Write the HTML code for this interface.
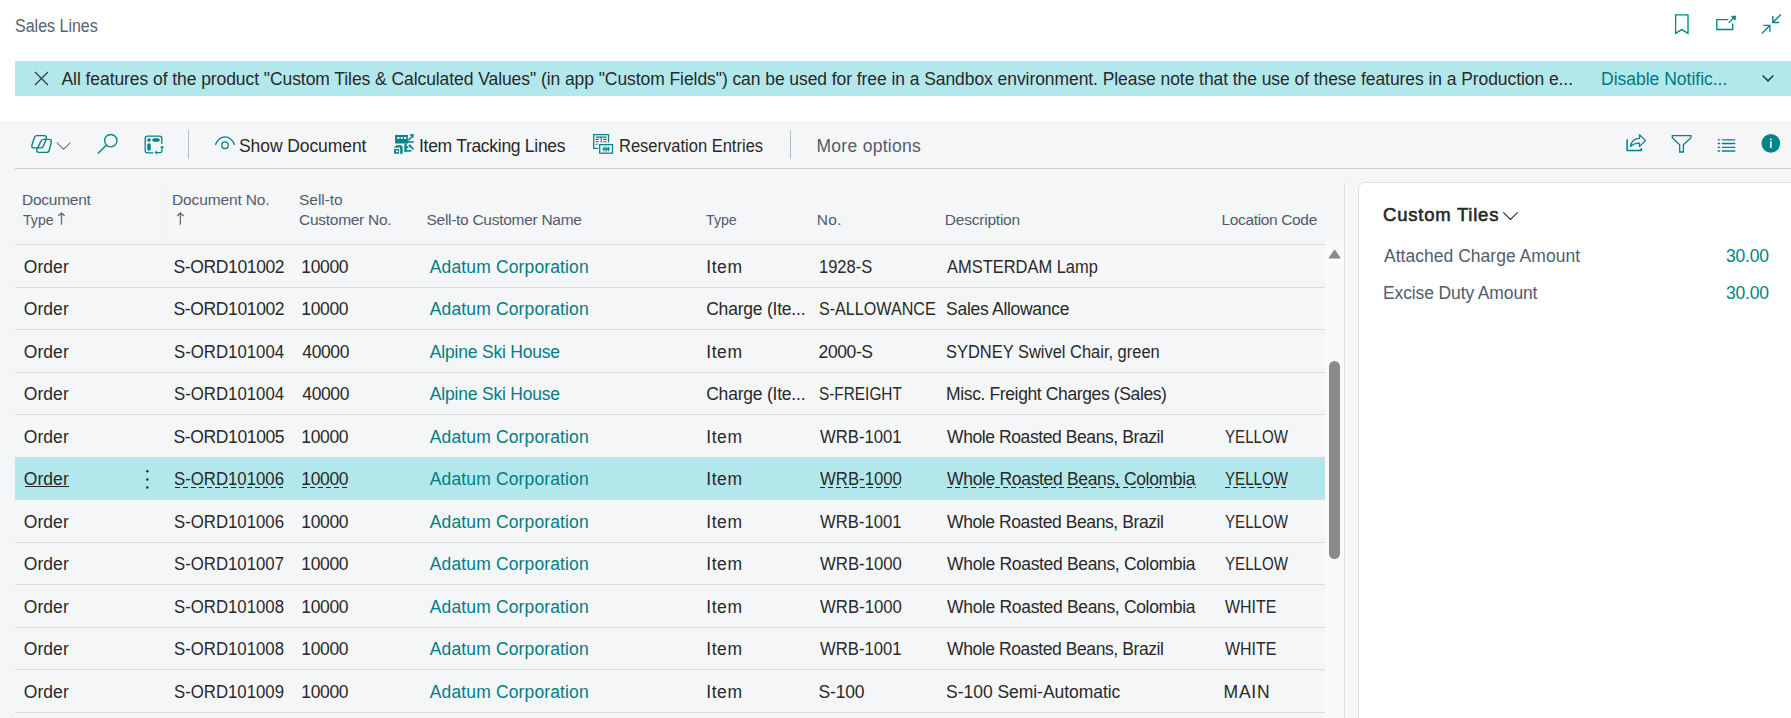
<!DOCTYPE html>
<html><head><meta charset="utf-8">
<style>
html,body{margin:0;padding:0;}
body{width:1791px;height:718px;overflow:hidden;position:relative;background:#ffffff;font-family:"Liberation Sans",sans-serif;}
.t{position:absolute;white-space:nowrap;line-height:1;}
.abs{position:absolute;}
svg{position:absolute;overflow:visible;}
</style></head><body>
<div class="abs" style="left:15px;top:61px;width:1776px;height:35px;background:#b2e8ec;"></div>
<div class="abs" style="left:0;top:121px;width:1791px;height:597px;background:#f5f6f8;"></div>
<div class="abs" style="left:15px;top:168px;width:1776px;height:1.2px;background:#c8cbd0;"></div>
<div class="abs" style="left:188px;top:130px;width:1px;height:29px;background:#b5bcc5;"></div>
<div class="abs" style="left:790px;top:130px;width:1px;height:29px;background:#b5bcc5;"></div>
<div class="abs" style="left:165px;top:183px;width:1px;height:60px;background:#eef0f2;"></div>
<div class="abs" style="left:15px;top:244px;width:1310px;height:1px;background:#d9dce0;"></div>
<div class="abs" style="left:15px;top:287px;width:1310px;height:1px;background:#d9dce0;"></div>
<div class="abs" style="left:15px;top:329px;width:1310px;height:1px;background:#d9dce0;"></div>
<div class="abs" style="left:15px;top:372px;width:1310px;height:1px;background:#d9dce0;"></div>
<div class="abs" style="left:15px;top:414px;width:1310px;height:1px;background:#d9dce0;"></div>
<div class="abs" style="left:15px;top:458px;width:1310px;height:41px;background:#b2e8ec;"></div>
<div class="abs" style="left:15px;top:457px;width:1310px;height:1px;background:#d9dce0;"></div>
<div class="abs" style="left:15px;top:499px;width:1310px;height:1px;background:#d9dce0;"></div>
<div class="abs" style="left:15px;top:542px;width:1310px;height:1px;background:#d9dce0;"></div>
<div class="abs" style="left:15px;top:584px;width:1310px;height:1px;background:#d9dce0;"></div>
<div class="abs" style="left:15px;top:627px;width:1310px;height:1px;background:#d9dce0;"></div>
<div class="abs" style="left:15px;top:669px;width:1310px;height:1px;background:#d9dce0;"></div>
<div class="abs" style="left:15px;top:712px;width:1310px;height:1px;background:#d9dce0;"></div>
<div class="abs" style="left:1325px;top:239px;width:19px;height:479px;background:#fafafa;"></div>
<div class="abs" style="left:1344px;top:183px;width:1px;height:535px;background:#dcdfe3;"></div>
<div class="abs" style="left:1329px;top:361px;width:11px;height:198px;background:#8a8a8a;border-radius:5.5px;"></div>
<div class="abs" style="left:1358px;top:182px;width:460px;height:600px;background:#ffffff;border:1px solid #dcdfe3;border-radius:7px;box-sizing:border-box;"></div>
<div class="t" style="left:14.81px;top:16.76px;font-size:18px;color:#56616f;transform:scaleX(0.8891);transform-origin:0 0;">Sales Lines</div>
<div class="t" style="left:61.50px;top:70.79px;font-size:17.5px;color:#292929;letter-spacing:-0.071px;">All features of the product "Custom Tiles &amp; Calculated Values" (in app "Custom Fields") can be used for free in a Sandbox environment. Please note that the use of these features in a Production e...</div>
<div class="t" style="left:1601.00px;top:70.79px;font-size:17.5px;color:#00787e;letter-spacing:-0.006px;">Disable Notific...</div>
<div class="t" style="left:239.00px;top:138.19px;font-size:17.5px;color:#292929;letter-spacing:-0.083px;">Show Document</div>
<div class="t" style="left:419.00px;top:138.19px;font-size:17.5px;color:#292929;letter-spacing:-0.289px;">Item Tracking Lines</div>
<div class="t" style="left:618.56px;top:138.19px;font-size:17.5px;color:#292929;transform:scaleX(0.9434);transform-origin:0 0;">Reservation Entries</div>
<div class="t" style="left:816.50px;top:138.19px;font-size:17.5px;color:#505c6d;letter-spacing:0.282px;">More options</div>
<div class="t" style="left:22.00px;top:191.88px;font-size:15.5px;color:#505c6d;letter-spacing:-0.257px;">Document</div>
<div class="t" style="left:23.00px;top:211.88px;font-size:15.5px;color:#505c6d;transform:scaleX(0.9091);transform-origin:0 0;">Type</div>
<div class="t" style="left:172.00px;top:191.88px;font-size:15.5px;color:#505c6d;letter-spacing:-0.136px;">Document No.</div>
<div class="t" style="left:299.00px;top:191.88px;font-size:15.5px;color:#505c6d;letter-spacing:-0.033px;">Sell-to</div>
<div class="t" style="left:299.00px;top:211.88px;font-size:15.5px;color:#505c6d;letter-spacing:-0.273px;">Customer No.</div>
<div class="t" style="left:426.50px;top:211.88px;font-size:15.5px;color:#505c6d;letter-spacing:-0.285px;">Sell-to Customer Name</div>
<div class="t" style="left:705.50px;top:211.88px;font-size:15.5px;color:#505c6d;transform:scaleX(0.9152);transform-origin:0 0;">Type</div>
<div class="t" style="left:816.80px;top:211.88px;font-size:15.5px;color:#505c6d;letter-spacing:0.350px;">No.</div>
<div class="t" style="left:944.80px;top:211.88px;font-size:15.5px;color:#505c6d;letter-spacing:-0.220px;">Description</div>
<div class="t" style="left:1221.50px;top:211.88px;font-size:15.5px;color:#505c6d;letter-spacing:-0.350px;">Location Code</div>
<div class="t" style="left:23.80px;top:258.59px;font-size:17.5px;color:#292929;letter-spacing:0.050px;">Order</div>
<div class="t" style="left:173.50px;top:258.59px;font-size:17.5px;color:#292929;letter-spacing:-0.370px;">S-ORD101002</div>
<div class="t" style="left:301.30px;top:258.59px;font-size:17.5px;color:#292929;letter-spacing:-0.350px;">10000</div>
<div class="t" style="left:429.80px;top:258.59px;font-size:17.5px;color:#007d84;letter-spacing:0.135px;">Adatum Corporation</div>
<div class="t" style="left:706.20px;top:258.59px;font-size:17.5px;color:#292929;letter-spacing:0.600px;">Item</div>
<div class="t" style="left:818.66px;top:258.59px;font-size:17.5px;color:#292929;transform:scaleX(0.9436);transform-origin:0 0;">1928-S</div>
<div class="t" style="left:947.10px;top:258.59px;font-size:17.5px;color:#292929;transform:scaleX(0.9400);transform-origin:0 0;">AMSTERDAM Lamp</div>
<div class="t" style="left:23.80px;top:301.09px;font-size:17.5px;color:#292929;letter-spacing:0.050px;">Order</div>
<div class="t" style="left:173.50px;top:301.09px;font-size:17.5px;color:#292929;letter-spacing:-0.370px;">S-ORD101002</div>
<div class="t" style="left:301.30px;top:301.09px;font-size:17.5px;color:#292929;letter-spacing:-0.350px;">10000</div>
<div class="t" style="left:429.80px;top:301.09px;font-size:17.5px;color:#007d84;letter-spacing:0.135px;">Adatum Corporation</div>
<div class="t" style="left:706.20px;top:301.09px;font-size:17.5px;color:#292929;letter-spacing:-0.215px;">Charge (Ite...</div>
<div class="t" style="left:818.68px;top:301.09px;font-size:17.5px;color:#292929;transform:scaleX(0.9208);transform-origin:0 0;">S-ALLOWANCE</div>
<div class="t" style="left:946.10px;top:301.09px;font-size:17.5px;color:#292929;letter-spacing:-0.293px;">Sales Allowance</div>
<div class="t" style="left:23.80px;top:343.59px;font-size:17.5px;color:#292929;letter-spacing:0.050px;">Order</div>
<div class="t" style="left:173.54px;top:343.59px;font-size:17.5px;color:#292929;transform:scaleX(0.9588);transform-origin:0 0;">S-ORD101004</div>
<div class="t" style="left:302.30px;top:343.59px;font-size:17.5px;color:#292929;letter-spacing:-0.375px;">40000</div>
<div class="t" style="left:429.80px;top:343.59px;font-size:17.5px;color:#007d84;letter-spacing:-0.200px;">Alpine Ski House</div>
<div class="t" style="left:706.20px;top:343.59px;font-size:17.5px;color:#292929;letter-spacing:0.600px;">Item</div>
<div class="t" style="left:818.60px;top:343.59px;font-size:17.5px;color:#292929;letter-spacing:-0.400px;">2000-S</div>
<div class="t" style="left:946.16px;top:343.59px;font-size:17.5px;color:#292929;transform:scaleX(0.9403);transform-origin:0 0;">SYDNEY Swivel Chair, green</div>
<div class="t" style="left:23.80px;top:386.09px;font-size:17.5px;color:#292929;letter-spacing:0.050px;">Order</div>
<div class="t" style="left:173.54px;top:386.09px;font-size:17.5px;color:#292929;transform:scaleX(0.9588);transform-origin:0 0;">S-ORD101004</div>
<div class="t" style="left:302.30px;top:386.09px;font-size:17.5px;color:#292929;letter-spacing:-0.375px;">40000</div>
<div class="t" style="left:429.80px;top:386.09px;font-size:17.5px;color:#007d84;letter-spacing:-0.200px;">Alpine Ski House</div>
<div class="t" style="left:706.20px;top:386.09px;font-size:17.5px;color:#292929;letter-spacing:-0.215px;">Charge (Ite...</div>
<div class="t" style="left:818.72px;top:386.09px;font-size:17.5px;color:#292929;transform:scaleX(0.8785);transform-origin:0 0;">S-FREIGHT</div>
<div class="t" style="left:946.10px;top:386.09px;font-size:17.5px;color:#292929;letter-spacing:-0.379px;">Misc. Freight Charges (Sales)</div>
<div class="t" style="left:23.80px;top:428.59px;font-size:17.5px;color:#292929;letter-spacing:0.050px;">Order</div>
<div class="t" style="left:173.50px;top:428.59px;font-size:17.5px;color:#292929;letter-spacing:-0.370px;">S-ORD101005</div>
<div class="t" style="left:301.30px;top:428.59px;font-size:17.5px;color:#292929;letter-spacing:-0.350px;">10000</div>
<div class="t" style="left:429.80px;top:428.59px;font-size:17.5px;color:#007d84;letter-spacing:0.135px;">Adatum Corporation</div>
<div class="t" style="left:706.20px;top:428.59px;font-size:17.5px;color:#292929;letter-spacing:0.600px;">Item</div>
<div class="t" style="left:819.60px;top:428.59px;font-size:17.5px;color:#292929;transform:scaleX(0.9529);transform-origin:0 0;">WRB-1001</div>
<div class="t" style="left:947.10px;top:428.59px;font-size:17.5px;color:#292929;letter-spacing:-0.415px;">Whole Roasted Beans, Brazil</div>
<div class="t" style="left:1224.60px;top:428.59px;font-size:17.5px;color:#292929;transform:scaleX(0.8630);transform-origin:0 0;">YELLOW</div>
<div class="t" style="left:23.80px;top:471.09px;font-size:17.5px;color:#292929;letter-spacing:0.050px;">Order</div>
<div class="t" style="left:173.54px;top:471.09px;font-size:17.5px;color:#292929;transform:scaleX(0.9584);transform-origin:0 0;">S-ORD101006</div>
<div class="t" style="left:301.30px;top:471.09px;font-size:17.5px;color:#292929;letter-spacing:-0.350px;">10000</div>
<div class="t" style="left:429.80px;top:471.09px;font-size:17.5px;color:#007d84;letter-spacing:0.135px;">Adatum Corporation</div>
<div class="t" style="left:706.20px;top:471.09px;font-size:17.5px;color:#292929;letter-spacing:0.600px;">Item</div>
<div class="t" style="left:819.60px;top:471.09px;font-size:17.5px;color:#292929;transform:scaleX(0.9565);transform-origin:0 0;">WRB-1000</div>
<div class="t" style="left:947.10px;top:471.09px;font-size:17.5px;color:#292929;letter-spacing:-0.336px;">Whole Roasted Beans, Colombia</div>
<div class="t" style="left:1224.60px;top:471.09px;font-size:17.5px;color:#292929;transform:scaleX(0.8630);transform-origin:0 0;">YELLOW</div>
<div class="t" style="left:23.80px;top:513.59px;font-size:17.5px;color:#292929;letter-spacing:0.050px;">Order</div>
<div class="t" style="left:173.54px;top:513.59px;font-size:17.5px;color:#292929;transform:scaleX(0.9584);transform-origin:0 0;">S-ORD101006</div>
<div class="t" style="left:301.30px;top:513.59px;font-size:17.5px;color:#292929;letter-spacing:-0.350px;">10000</div>
<div class="t" style="left:429.80px;top:513.59px;font-size:17.5px;color:#007d84;letter-spacing:0.135px;">Adatum Corporation</div>
<div class="t" style="left:706.20px;top:513.59px;font-size:17.5px;color:#292929;letter-spacing:0.600px;">Item</div>
<div class="t" style="left:819.60px;top:513.59px;font-size:17.5px;color:#292929;transform:scaleX(0.9529);transform-origin:0 0;">WRB-1001</div>
<div class="t" style="left:947.10px;top:513.59px;font-size:17.5px;color:#292929;letter-spacing:-0.415px;">Whole Roasted Beans, Brazil</div>
<div class="t" style="left:1224.60px;top:513.59px;font-size:17.5px;color:#292929;transform:scaleX(0.8630);transform-origin:0 0;">YELLOW</div>
<div class="t" style="left:23.80px;top:556.09px;font-size:17.5px;color:#292929;letter-spacing:0.050px;">Order</div>
<div class="t" style="left:173.54px;top:556.09px;font-size:17.5px;color:#292929;transform:scaleX(0.9584);transform-origin:0 0;">S-ORD101007</div>
<div class="t" style="left:301.30px;top:556.09px;font-size:17.5px;color:#292929;letter-spacing:-0.350px;">10000</div>
<div class="t" style="left:429.80px;top:556.09px;font-size:17.5px;color:#007d84;letter-spacing:0.135px;">Adatum Corporation</div>
<div class="t" style="left:706.20px;top:556.09px;font-size:17.5px;color:#292929;letter-spacing:0.600px;">Item</div>
<div class="t" style="left:819.60px;top:556.09px;font-size:17.5px;color:#292929;transform:scaleX(0.9565);transform-origin:0 0;">WRB-1000</div>
<div class="t" style="left:947.10px;top:556.09px;font-size:17.5px;color:#292929;letter-spacing:-0.336px;">Whole Roasted Beans, Colombia</div>
<div class="t" style="left:1224.60px;top:556.09px;font-size:17.5px;color:#292929;transform:scaleX(0.8630);transform-origin:0 0;">YELLOW</div>
<div class="t" style="left:23.80px;top:598.59px;font-size:17.5px;color:#292929;letter-spacing:0.050px;">Order</div>
<div class="t" style="left:173.54px;top:598.59px;font-size:17.5px;color:#292929;transform:scaleX(0.9584);transform-origin:0 0;">S-ORD101008</div>
<div class="t" style="left:301.30px;top:598.59px;font-size:17.5px;color:#292929;letter-spacing:-0.350px;">10000</div>
<div class="t" style="left:429.80px;top:598.59px;font-size:17.5px;color:#007d84;letter-spacing:0.135px;">Adatum Corporation</div>
<div class="t" style="left:706.20px;top:598.59px;font-size:17.5px;color:#292929;letter-spacing:0.600px;">Item</div>
<div class="t" style="left:819.60px;top:598.59px;font-size:17.5px;color:#292929;transform:scaleX(0.9565);transform-origin:0 0;">WRB-1000</div>
<div class="t" style="left:947.10px;top:598.59px;font-size:17.5px;color:#292929;letter-spacing:-0.336px;">Whole Roasted Beans, Colombia</div>
<div class="t" style="left:1224.60px;top:598.59px;font-size:17.5px;color:#292929;transform:scaleX(0.9107);transform-origin:0 0;">WHITE</div>
<div class="t" style="left:23.80px;top:641.09px;font-size:17.5px;color:#292929;letter-spacing:0.050px;">Order</div>
<div class="t" style="left:173.54px;top:641.09px;font-size:17.5px;color:#292929;transform:scaleX(0.9584);transform-origin:0 0;">S-ORD101008</div>
<div class="t" style="left:301.30px;top:641.09px;font-size:17.5px;color:#292929;letter-spacing:-0.350px;">10000</div>
<div class="t" style="left:429.80px;top:641.09px;font-size:17.5px;color:#007d84;letter-spacing:0.135px;">Adatum Corporation</div>
<div class="t" style="left:706.20px;top:641.09px;font-size:17.5px;color:#292929;letter-spacing:0.600px;">Item</div>
<div class="t" style="left:819.60px;top:641.09px;font-size:17.5px;color:#292929;transform:scaleX(0.9529);transform-origin:0 0;">WRB-1001</div>
<div class="t" style="left:947.10px;top:641.09px;font-size:17.5px;color:#292929;letter-spacing:-0.415px;">Whole Roasted Beans, Brazil</div>
<div class="t" style="left:1224.60px;top:641.09px;font-size:17.5px;color:#292929;transform:scaleX(0.9107);transform-origin:0 0;">WHITE</div>
<div class="t" style="left:23.80px;top:683.59px;font-size:17.5px;color:#292929;letter-spacing:0.050px;">Order</div>
<div class="t" style="left:173.54px;top:683.59px;font-size:17.5px;color:#292929;transform:scaleX(0.9584);transform-origin:0 0;">S-ORD101009</div>
<div class="t" style="left:301.30px;top:683.59px;font-size:17.5px;color:#292929;letter-spacing:-0.350px;">10000</div>
<div class="t" style="left:429.80px;top:683.59px;font-size:17.5px;color:#007d84;letter-spacing:0.135px;">Adatum Corporation</div>
<div class="t" style="left:706.20px;top:683.59px;font-size:17.5px;color:#292929;letter-spacing:0.600px;">Item</div>
<div class="t" style="left:818.60px;top:683.59px;font-size:17.5px;color:#292929;letter-spacing:-0.200px;">S-100</div>
<div class="t" style="left:946.10px;top:683.59px;font-size:17.5px;color:#292929;letter-spacing:-0.042px;">S-100 Semi-Automatic</div>
<div class="t" style="left:1223.60px;top:683.59px;font-size:17.5px;color:#292929;letter-spacing:0.733px;">MAIN</div>
<div class="t" style="left:23.80px;top:726.09px;font-size:17.5px;color:#292929;letter-spacing:0.050px;">Order</div>
<div class="t" style="left:173.54px;top:726.09px;font-size:17.5px;color:#292929;transform:scaleX(0.9584);transform-origin:0 0;">S-ORD101010</div>
<div class="t" style="left:301.30px;top:726.09px;font-size:17.5px;color:#292929;letter-spacing:-0.350px;">10000</div>
<div class="t" style="left:429.80px;top:726.09px;font-size:17.5px;color:#007d84;letter-spacing:0.135px;">Adatum Corporation</div>
<div class="t" style="left:706.20px;top:726.09px;font-size:17.5px;color:#292929;letter-spacing:0.600px;">Item</div>
<div class="t" style="left:818.60px;top:726.09px;font-size:17.5px;color:#292929;letter-spacing:-0.200px;">S-100</div>
<div class="t" style="left:946.10px;top:726.09px;font-size:17.5px;color:#292929;letter-spacing:-0.042px;">S-100 Semi-Automatic</div>
<div class="t" style="left:1223.60px;top:726.09px;font-size:17.5px;color:#292929;letter-spacing:0.733px;">MAIN</div>
<div class="t" style="left:1383.00px;top:205.84px;font-size:18.5px;color:#292929;letter-spacing:0.773px;-webkit-text-stroke:0.55px #212121;">Custom Tiles</div>
<div class="t" style="left:1384.00px;top:248.19px;font-size:17.5px;color:#505c6d;letter-spacing:0.024px;">Attached Charge Amount</div>
<div class="t" style="left:1383.00px;top:285.19px;font-size:17.5px;color:#505c6d;letter-spacing:-0.124px;">Excise Duty Amount</div>
<div class="t" style="left:1726.00px;top:248.19px;font-size:17.5px;color:#008489;letter-spacing:-0.225px;">30.00</div>
<div class="t" style="left:1726.00px;top:285.19px;font-size:17.5px;color:#008489;letter-spacing:-0.225px;">30.00</div>
<div class="abs" style="left:24.8px;top:485.5px;width:44.2px;height:1.1px;background:#292929;"></div>
<div class="abs" style="left:174.5px;top:486.7px;width:108.3px;height:1.8px;background:repeating-linear-gradient(90deg,#292929 0 5px,transparent 5px 8px);"></div>
<div class="abs" style="left:302.3px;top:486.7px;width:45.6px;height:1.8px;background:repeating-linear-gradient(90deg,#292929 0 5px,transparent 5px 8px);"></div>
<div class="abs" style="left:819.6px;top:486.7px;width:81.3px;height:1.8px;background:repeating-linear-gradient(90deg,#292929 0 5px,transparent 5px 8px);"></div>
<div class="abs" style="left:947.1px;top:486.7px;width:248.6px;height:1.8px;background:repeating-linear-gradient(90deg,#292929 0 5px,transparent 5px 8px);"></div>
<div class="abs" style="left:1224.6px;top:486.7px;width:63.0px;height:1.8px;background:repeating-linear-gradient(90deg,#292929 0 5px,transparent 5px 8px);"></div>
<svg style="left:0;top:0" width="1791" height="718" viewBox="0 0 1791 718">
<!-- bookmark -->
<path d="M1675.6,14.8 H1688 V33.3 L1681.8,29.6 L1675.6,33.3 Z" stroke="#008489" fill="none" stroke-width="1.3" stroke-linejoin="miter"/>
<!-- popout -->
<path d="M1728.3,19.6 H1716.8 V29.5 H1732.7 V23.5" stroke="#008489" fill="none" stroke-width="1.3"/>
<path d="M1728.8,22.8 L1733.6,18" stroke="#008489" fill="none" stroke-width="1.3"/>
<path d="M1735.6,16 L1731.4,16.5 L1735.1,20.2 Z" fill="#008489" stroke="#008489" stroke-width="0.8" stroke-linejoin="round"/>
<!-- collapse -->
<path d="M1780.8,14.4 L1773,22.2 M1772.8,16 V22.5 H1779.2" stroke="#008489" fill="none" stroke-width="1.35"/>
<path d="M1761.8,33.6 L1769.8,25.6 M1763.4,25.3 H1769.9 V31.8" stroke="#008489" fill="none" stroke-width="1.35"/>
<!-- notification close X -->
<path d="M35,72 L48,85 M48,72 L35,85" stroke="#333" stroke-width="1.1" fill="none"/>
<!-- notification chevron -->
<path d="M1762.6,75.5 L1768,80.9 L1773.4,75.5" stroke="#1a3a40" stroke-width="1.5" fill="none"/>
<!-- copilot icon -->
<g stroke="#008489" fill="none" stroke-width="1.35">
<path d="M36.6,135.6 H44.2 Q46.9,135.6 46.3,138.2 L43.5,146 Q42.9,147.9 40.8,147.9 H33.9 Q31.3,147.9 31.9,145.2 L34.3,137.8 Q34.9,135.6 36.6,135.6 Z"/>
<path d="M43.7,139.3 H49.1 Q51.8,139.3 51.3,142 L49.3,150 Q48.7,152.4 46.5,152.4 H38.9 Q36.3,152.4 36.8,150 L40.8,141.4 Q41.7,139.3 43.7,139.3 Z"/>
</g>
<path d="M56.8,142.5 L63.6,149.3 L70.4,142.5" stroke="#5f5f5f" stroke-width="1.05" fill="none"/>
<!-- search -->
<circle cx="110.8" cy="140.7" r="6.2" stroke="#008489" fill="none" stroke-width="1.35"/>
<path d="M106.3,145.2 L97.9,153.6" stroke="#008489" fill="none" stroke-width="1.4"/>
<!-- layout icon -->
<path d="M153.4,152.8 H147.5 Q145.2,152.8 145.2,150.5 V138.5 Q145.2,136.2 147.5,136.2 H159.5 Q161.8,136.2 161.8,138.5 V144" stroke="#008489" fill="none" stroke-width="1.3"/>
<circle cx="149" cy="140" r="1.8" fill="#008489"/>
<rect x="152.2" y="138.2" width="7.6" height="3.6" rx="1.8" fill="#008489"/>
<rect x="147.2" y="143.2" width="3.6" height="7.6" rx="1.8" fill="#008489"/>
<path d="M156,152.6 H160 Q162,152.6 162,150.6 V147.3" stroke="#008489" fill="none" stroke-width="1.2"/>
<path d="M162,145.6 L164,148 H160 Z" fill="#008489"/>
<path d="M154.6,152.6 L157,150.5 V154.7 Z" fill="#008489"/>
<!-- eye -->
<path d="M215.6,144.4 Q219,136.8 225,136.8 Q231,136.8 234.4,144.4" stroke="#008489" fill="none" stroke-width="1.35" stroke-linecap="round"/>
<circle cx="225" cy="145.2" r="3.3" stroke="#008489" fill="none" stroke-width="1.3"/>
<!-- item tracking icon -->
<g fill="#008489">
<path d="M395.1,134.9 H407.9 V143.5 H395.1 Z M397.3,136.9 V139 H399.5 V136.9 Z M400.6,136.9 V139 H402.9 V136.9 Z M404,136.9 V139 H406.3 V136.9 Z" fill-rule="evenodd"/>
<path d="M394.1,147.2 L396.4,145.2 H401.3 L402.6,146.5 V153.8 H394.1 Z"/>
<rect x="404.5" y="143.4" width="2.2" height="8.2"/>
<rect x="404.5" y="146.4" width="3.8" height="1.9"/>
<rect x="404.3" y="150" width="7.2" height="1.6"/>
<path d="M409.4,134.5 L413.9,133.9 L413.3,138.5 Z"/>
<path d="M408.3,140.2 L411.5,137" stroke="#008489" stroke-width="1.5"/>
<path d="M406.9,141.9 L408.6,140.7 V141.2 H413.8 V142.7 H408.6 V143.2 Z"/>
<path d="M409.3,145.2 L413.6,149.5" stroke="#008489" stroke-width="1.7"/>
<path d="M408.7,144.6 L411.6,144.9 L409,147.5 Z"/>
</g>
<g fill="#f5f6f8">
<rect x="399.1" y="147.2" width="1.1" height="6.8"/>
<rect x="394.1" y="147.6" width="5" height="1.4"/>
<rect x="395.9" y="150.4" width="2.3" height="1.8"/>
</g>
<!-- reservation icon -->
<g stroke="#008489" fill="none" stroke-width="1.25">
<path d="M598.2,148.3 H593.7 V134.5 H608.5 V142.5"/>
<rect x="599.7" y="144.6" width="12.8" height="8.6"/>
</g>
<g stroke="#008489" stroke-width="1.1" fill="none">
<path d="M595.8,137.1 H606.7 M601.2,137.1 V142.6 M595.6,139.4 H598.8 M595.6,141.8 H598.8 M595.6,144.3 H597.5 M603.2,139.4 H606.7 M603.2,141.8 H606.7"/>
<path d="M602.2,149 L603.2,148.2 H609.4 L610.4,149 L609.4,149.8 H603.2 Z" fill="#008489" stroke="none"/>
<path d="M603.9,146.6 V151.4 M606.1,146.2 V151.8 M608.3,146.6 V151.4" stroke-width="1"/>
</g>
<!-- share -->
<path d="M1627.1,139.2 V150.6 H1641.3 V148" stroke="#008489" fill="none" stroke-width="1.5"/>
<path d="M1630.4,146.6 C1631.4,141.3 1635,138.4 1639.5,138.4 V134.6 L1645.4,140.5 L1639.5,146.6 V143.2 C1636,143 1633,144.3 1630.4,146.6 Z" stroke="#008489" fill="none" stroke-width="1.2" stroke-linejoin="round"/>
<!-- filter -->
<path d="M1672.3,135.7 H1691 V137.6 L1683.4,144.7 V152 H1679.7 V144.7 L1672.3,137.6 Z" stroke="#008489" fill="none" stroke-width="1.3"/>
<!-- list -->
<g stroke="#008489" stroke-width="1.3" fill="none" stroke-linecap="round">
<path d="M1718.2,139.8 H1719.6 M1722.4,139.8 H1734.8 M1718.2,143.5 H1719.6 M1722.4,143.5 H1734.8 M1718.2,147.4 H1719.6 M1722.4,147.4 H1734.8 M1718.2,151 H1719.6 M1722.4,151 H1734.8"/>
</g>
<!-- info -->
<circle cx="1770.85" cy="143.3" r="9.35" fill="#008489"/>
<rect x="1769.95" y="138.6" width="1.9" height="1.6" fill="#cfeeee"/>
<rect x="1769.95" y="141.3" width="1.9" height="6.6" fill="#cfeeee"/>
<!-- sort arrows -->
<g stroke="#6b6b6b" stroke-width="1.3" fill="none">
<path d="M61.5,212.8 V224.8 M58.3,216 L61.5,212.8 L64.7,216"/>
<path d="M180.4,212.8 V224.8 M177.2,216 L180.4,212.8 L183.6,216"/>
</g>
<!-- scroll up arrow -->
<path d="M1334.6,250.3 L1340,258 H1329.2 Z" fill="#8a8a8a" stroke="#8a8a8a" stroke-width="1.2" stroke-linejoin="round"/>
<!-- custom tiles chevron -->
<path d="M1503.3,212.4 L1510.5,219.5 L1517.7,212.4" stroke="#292929" stroke-width="1.1" fill="none"/>
<!-- row kebab -->
<g fill="#292929">
<circle cx="147.3" cy="471.3" r="1.25"/>
<circle cx="147.3" cy="479.5" r="1.25"/>
<circle cx="147.3" cy="487.5" r="1.25"/>
</g>
</svg>
</body></html>
